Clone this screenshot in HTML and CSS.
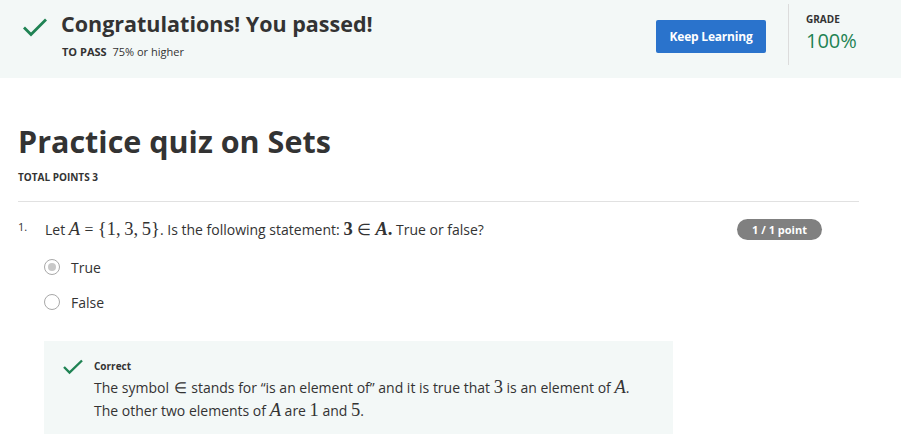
FILE: index.html
```html
<!DOCTYPE html>
<html>
<head>
<meta charset="utf-8">
<link rel="stylesheet" href="styles.css">
</head>
<body>
<header class="banner">
  <div class="banner-main">
    <svg class="check-lg" width="26" height="20" viewBox="0 0 26 20"><path d="M2 9.5 L9 16.5 L24 1.5" fill="none" stroke="#1f8354" stroke-width="2.8"/></svg>
    <div class="banner-text">
      <h1 class="congrats">Congratulations! You passed!</h1>
      <div class="to-pass"><b>TO PASS</b> 75% or higher</div>
    </div>
  </div>
  <button class="keep-btn">Keep Learning</button>
  <div class="grade">
    <div class="grade-label">GRADE</div>
    <div class="grade-value">100%</div>
  </div>
</header>
<main class="content">
  <h2 class="quiz-title">Practice quiz on Sets</h2>
  <div class="total">TOTAL POINTS 3</div>
  <div class="question">
    <div class="q-row">
      <span class="q-num">1.</span>
      <div class="q-text">Let <span class="m"><i>A</i><span class="rel">=</span>{1,<span class="th"></span>3,<span class="th"></span>5}</span>. Is the following statement: <span class="m mb">3<span class="rel">∈</span><i>A</i>.</span> True or false?</div>
      <span class="badge">1 / 1 point</span>
    </div>
    <div class="options">
      <label class="opt"><span class="radio checked"></span>True</label>
      <label class="opt"><span class="radio"></span>False</label>
    </div>
    <div class="feedback">
      <svg class="check-sm" width="22" height="16" viewBox="0 0 22 16"><path d="M2 8 L7.5 13.5 L20 1.5" fill="none" stroke="#1f8354" stroke-width="2.4"/></svg>
      <div class="fb-body">
        <div class="fb-title">Correct</div>
        <p class="fb-text">The symbol <span class="m sym">∈</span> stands for “is an element of” and it is true that <span class="m">3</span> is an element of <span class="m"><i>A</i></span>.<br>The other two elements of <span class="m"><i>A</i></span> are <span class="m">1</span> and <span class="m">5</span>.</p>
      </div>
    </div>
  </div>
</main>
</body>
</html>
```
FILE: styles.css
```css
* { box-sizing: border-box; }
body {
  margin: 0;
  font-family: "Open Sans", "Liberation Sans", sans-serif;
  color: #333;
  background: #fff;
}
.banner {
  display: flex;
  align-items: flex-start;
  background: #f3f8f7;
  height: 78px;
  padding: 0 0 0 22px;
}
.banner-main {
  flex: 1;
  display: flex;
  align-items: flex-start;
  padding-top: 9px;
}
.check-lg { margin-top: 9px; margin-right: 13px; }
.congrats {
  margin: 0;
  font-size: 21.5px;
  line-height: 30px;
  font-weight: 700;
  color: #333;
}
.to-pass {
  font-size: 11px;
  line-height: 14px;
  margin-top: 6px;
  margin-left: 1px;
  color: #333;
}
.to-pass b { font-weight: 700; margin-right: 3px; }
.keep-btn {
  margin-top: 20px;
  width: 110px;
  height: 33px;
  border: 0;
  border-radius: 2px;
  background: #2a73cc;
  color: #fff;
  font-family: inherit;
  font-size: 12px;
  font-weight: 700;
  letter-spacing: -0.2px;
}
.grade {
  margin-left: 22px;
  margin-top: 4px;
  border-left: 1px solid #dcdcdc;
  height: 61px;
  width: 113px;
  padding-left: 17px;
  padding-top: 8px;
}
.grade-label { font-size: 10px; line-height: 14px; font-weight: 700; color: #333; }
.grade-value { font-size: 20px; color: #1f8354; line-height: 26px; margin-top: 2px; }
.content {
  padding: 0 42px 0 18px;
}
.quiz-title {
  margin: 43px 0 0;
  font-size: 30.5px;
  line-height: 40px;
  font-weight: 700;
}
.total {
  font-size: 10px;
  font-weight: 700;
  margin-top: 9px;
  padding-bottom: 17px;
  border-bottom: 1px solid #e1e1e1;
}
.q-row {
  display: flex;
  align-items: center;
  margin-top: 17px;
}
.q-num { font-size: 11px; width: 27px; align-self: flex-start; }
.q-text { flex: 1; font-size: 14px; }
.m { font-family: "Liberation Serif", serif; font-size: 18.5px; line-height: 1; }
.rel { margin: 0 0.28em; font-size: 0.85em; }
.th { display: inline-block; width: 0.2em; }
.mb { font-weight: 700; }
.mb .rel { font-weight: 400; }
.sym { font-size: 15px; margin: 0 1px; }
.badge {
  margin-right: 37px;
  background: #808080;
  color: #fff;
  font-size: 11px;
  font-weight: 700;
  border-radius: 11px;
  width: 85px;
  height: 21px;
  line-height: 21px;
  text-align: center;
}
.options { padding-left: 26px; margin-top: 18px; }
.opt {
  display: flex;
  align-items: center;
  font-size: 14px;
  height: 18px;
  margin-bottom: 17px;
}
.radio {
  width: 16px;
  height: 16px;
  border: 1px solid #a8a8a8;
  border-radius: 50%;
  margin-right: 11px;
  position: relative;
}
.radio.checked::after {
  content: "";
  position: absolute;
  left: 3px; top: 3px;
  width: 8px; height: 8px;
  border-radius: 50%;
  background: #c8c8c8;
}
.feedback {
  margin-top: 30px;
  margin-left: 26px;
  width: 629px;
  height: 93px;
  background: #f3f8f7;
  display: flex;
  padding: 18px 0 0 18px;
}
.check-sm { margin-top: 0; margin-right: 10px; }
.fb-title { font-size: 10px; font-weight: 700; }
.fb-text { margin: 3px 0 0; font-size: 14px; line-height: 23px; }
```
